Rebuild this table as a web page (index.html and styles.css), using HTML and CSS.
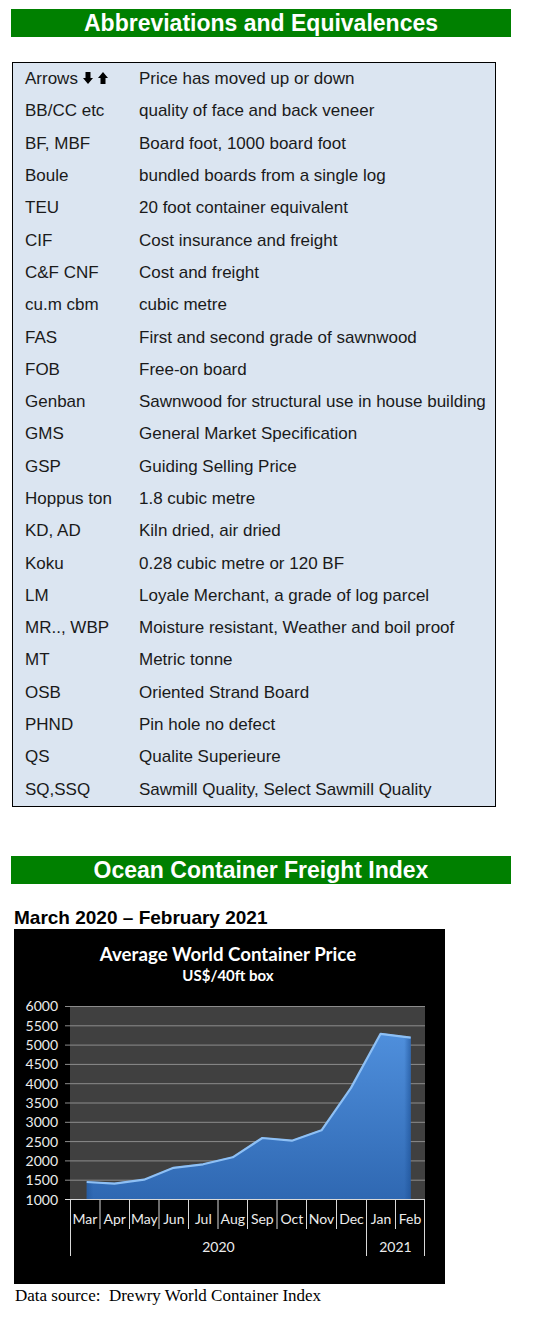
FILE: index.html
```html
<!DOCTYPE html>
<html>
<head>
<meta charset="utf-8">
<link rel="stylesheet" href="styles.css">
</head>
<body>
<div class="page">
  <h1 class="band">Abbreviations and Equivalences</h1>

  <div class="abbr">
    <div class="row"><span class="k">Arrows <svg class="arrows" width="26" height="12" viewBox="0 0 26 12"><path d="M2.5 0h5v6h2.5L5 12 0 6h2.5z" fill="#000"/><path d="M17.5 12h5V6H25L20 0 15 6h2.5z" fill="#000"/></svg></span><span class="v">Price has moved up or down</span></div>
    <div class="row"><span class="k">BB/CC etc</span><span class="v">quality of face and back veneer</span></div>
    <div class="row"><span class="k">BF, MBF</span><span class="v">Board foot, 1000 board foot</span></div>
    <div class="row"><span class="k">Boule</span><span class="v">bundled boards from a single log</span></div>
    <div class="row"><span class="k">TEU</span><span class="v">20 foot container equivalent</span></div>
    <div class="row"><span class="k">CIF</span><span class="v">Cost insurance and freight</span></div>
    <div class="row"><span class="k">C&amp;F CNF</span><span class="v">Cost and freight</span></div>
    <div class="row"><span class="k">cu.m cbm</span><span class="v">cubic metre</span></div>
    <div class="row"><span class="k">FAS</span><span class="v">First and second grade of sawnwood</span></div>
    <div class="row"><span class="k">FOB</span><span class="v">Free-on board</span></div>
    <div class="row"><span class="k">Genban</span><span class="v">Sawnwood for structural use in house building</span></div>
    <div class="row"><span class="k">GMS</span><span class="v">General Market Specification</span></div>
    <div class="row"><span class="k">GSP</span><span class="v">Guiding Selling Price</span></div>
    <div class="row"><span class="k">Hoppus ton</span><span class="v">1.8 cubic metre</span></div>
    <div class="row"><span class="k">KD, AD</span><span class="v">Kiln dried, air dried</span></div>
    <div class="row"><span class="k">Koku</span><span class="v">0.28 cubic metre or 120 BF</span></div>
    <div class="row"><span class="k">LM</span><span class="v">Loyale Merchant, a grade of log parcel</span></div>
    <div class="row"><span class="k">MR.., WBP</span><span class="v">Moisture resistant, Weather and boil proof</span></div>
    <div class="row"><span class="k">MT</span><span class="v">Metric tonne</span></div>
    <div class="row"><span class="k">OSB</span><span class="v">Oriented Strand Board</span></div>
    <div class="row"><span class="k">PHND</span><span class="v">Pin hole no defect</span></div>
    <div class="row"><span class="k">QS</span><span class="v">Qualite Superieure</span></div>
    <div class="row"><span class="k">SQ,SSQ</span><span class="v">Sawmill Quality, Select Sawmill Quality</span></div>
  </div>

  <h1 class="band band2">Ocean Container Freight Index</h1>

  <h2 class="period">March 2020 – February 2021</h2>

  <div class="chart">
    <svg width="431" height="355" viewBox="0 0 431 355">
      <defs>
        <linearGradient id="fillv" x1="0" y1="0" x2="0" y2="1">
          <stop offset="0" stop-color="#4f8fdc"/>
          <stop offset="1" stop-color="#2f68b2"/>
        </linearGradient>
        <linearGradient id="fillh" x1="0" y1="0" x2="1" y2="0">
          <stop offset="0" stop-color="#1c4f93" stop-opacity="0.5"/>
          <stop offset="0.02" stop-color="#1c4f93" stop-opacity="0"/>
          <stop offset="0.98" stop-color="#1c4f93" stop-opacity="0"/>
          <stop offset="1" stop-color="#1c4f93" stop-opacity="0.6"/>
        </linearGradient>
      </defs>
      <text class="ct" x="214" y="32" text-anchor="middle">Average World Container Price</text>
      <text class="cs" x="214" y="52" text-anchor="middle">US$/40ft box</text>

      <rect x="56" y="77" width="355" height="193" fill="#404040"/>
      <g stroke="#8c8c8c" stroke-width="1">
        <line x1="51" y1="77.5" x2="411" y2="77.5"/>
        <line x1="51" y1="96.8" x2="411" y2="96.8"/>
        <line x1="51" y1="116.1" x2="411" y2="116.1"/>
        <line x1="51" y1="135.4" x2="411" y2="135.4"/>
        <line x1="51" y1="154.7" x2="411" y2="154.7"/>
        <line x1="51" y1="174" x2="411" y2="174"/>
        <line x1="51" y1="193.3" x2="411" y2="193.3"/>
        <line x1="51" y1="212.6" x2="411" y2="212.6"/>
        <line x1="51" y1="231.9" x2="411" y2="231.9"/>
        <line x1="51" y1="251.2" x2="411" y2="251.2"/>
      </g>

      <polygon points="72.7,270 72.7,252.2 100.4,253.8 130,249.9 159.5,238 189.1,234.5 218.7,227.5 248.3,208.2 277.9,210.9 307.5,200.5 337,158.1 366.6,104 396.7,107.9 396.7,270" fill="url(#fillv)"/>
      <polygon points="72.7,270 72.7,252.2 100.4,253.8 130,249.9 159.5,238 189.1,234.5 218.7,227.5 248.3,208.2 277.9,210.9 307.5,200.5 337,158.1 366.6,104 396.7,107.9 396.7,270" fill="url(#fillh)"/>
      <polyline points="72.7,253 100.4,254.6 130,250.7 159.5,238.8 189.1,235.3 218.7,228.3 248.3,209 277.9,211.7 307.5,201.3 337,158.9 366.6,104.8 396.7,108.7" fill="none" stroke="#8ec0f5" stroke-width="2.2" stroke-linejoin="round"/>

      <g stroke="#d9d9d9" stroke-width="1">
        <line x1="51" y1="270.5" x2="411" y2="270.5"/>
        <line x1="56.5" y1="270" x2="56.5" y2="327"/>
        <line x1="86" y1="270" x2="86" y2="300"/>
        <line x1="115.5" y1="270" x2="115.5" y2="300"/>
        <line x1="145" y1="270" x2="145" y2="300"/>
        <line x1="174.5" y1="270" x2="174.5" y2="300"/>
        <line x1="204" y1="270" x2="204" y2="300"/>
        <line x1="233.5" y1="270" x2="233.5" y2="300"/>
        <line x1="263" y1="270" x2="263" y2="300"/>
        <line x1="292.5" y1="270" x2="292.5" y2="300"/>
        <line x1="322.5" y1="270" x2="322.5" y2="300"/>
        <line x1="352.5" y1="270" x2="352.5" y2="327"/>
        <line x1="381.5" y1="270" x2="381.5" y2="300"/>
        <line x1="410.5" y1="270" x2="410.5" y2="327"/>
      </g>

      <g class="yl" text-anchor="end">
        <text x="44" y="82">6000</text>
        <text x="44" y="101.5">5500</text>
        <text x="44" y="121">5000</text>
        <text x="44" y="140">4500</text>
        <text x="44" y="159.5">4000</text>
        <text x="44" y="179">3500</text>
        <text x="44" y="198">3000</text>
        <text x="44" y="217.5">2500</text>
        <text x="44" y="237">2000</text>
        <text x="44" y="256">1500</text>
        <text x="44" y="275.5">1000</text>
      </g>
      <g class="xl" text-anchor="middle">
        <text x="71" y="295">Mar</text>
        <text x="100.7" y="295">Apr</text>
        <text x="130.3" y="295">May</text>
        <text x="159.8" y="295">Jun</text>
        <text x="189.3" y="295">Jul</text>
        <text x="218.8" y="295">Aug</text>
        <text x="248.3" y="295">Sep</text>
        <text x="277.8" y="295">Oct</text>
        <text x="307.5" y="295">Nov</text>
        <text x="337.5" y="295">Dec</text>
        <text x="367" y="295">Jan</text>
        <text x="396" y="295">Feb</text>
        <text x="204.5" y="323">2020</text>
        <text x="381.5" y="323">2021</text>
      </g>
    </svg>
  </div>

  <p class="source">Data source:&nbsp; Drewry World Container Index</p>
</div>
</body>
</html>
```

FILE: styles.css
```css
html, body {
  margin: 0;
  padding: 0;
  background: #ffffff;
}

.page {
  width: 541px;
  padding-top: 9px;
}

.band {
  margin: 0 0 0 11px;
  width: 500px;
  height: 28px;
  background: #008000;
  color: #ffffff;
  font-family: "Liberation Sans", Arial, sans-serif;
  font-weight: bold;
  font-size: 23px;
  line-height: 29px;
  text-align: center;
}

.abbr {
  margin: 25px 0 0 12px;
  width: 482px;
  height: 743px;
  border: 1px solid #000000;
  background: #dbe5f1;
  display: flex;
  flex-direction: column;
  font-family: "Liberation Sans", Arial, sans-serif;
  font-size: 17px;
  color: #1a1a1a;
}

.row {
  flex: 1;
  display: flex;
  align-items: center;
  padding-left: 12px;
}

.k {
  width: 114px;
  display: flex;
  align-items: center;
  gap: 5px;
}

.arrows {
  margin-top: -2px;
}

.band2 {
  margin-top: 49px;
}

.period {
  margin: 23px 0 0 14px;
  font-family: "Liberation Sans", Arial, sans-serif;
  font-weight: bold;
  font-size: 19px;
  line-height: 22px;
  color: #000000;
}

.chart {
  margin: 0 0 0 14px;
  width: 431px;
  height: 355px;
  background: #000000;
}

.chart svg {
  display: block;
}

.ct {
  font-family: Lato, "Open Sans", sans-serif;
  font-weight: bold;
  font-size: 18.7px;
  fill: #ffffff;
}

.cs {
  font-family: Lato, "Open Sans", sans-serif;
  font-weight: bold;
  font-size: 15px;
  fill: #ffffff;
}

.yl text, .xl text {
  font-family: Lato, "Open Sans", sans-serif;
  font-size: 14px;
  fill: #ececec;
}

.source {
  margin: 2px 0 0 15px;
  font-family: "Liberation Serif", "Times New Roman", serif;
  font-size: 17px;
  line-height: 19px;
  color: #000000;
}
```
